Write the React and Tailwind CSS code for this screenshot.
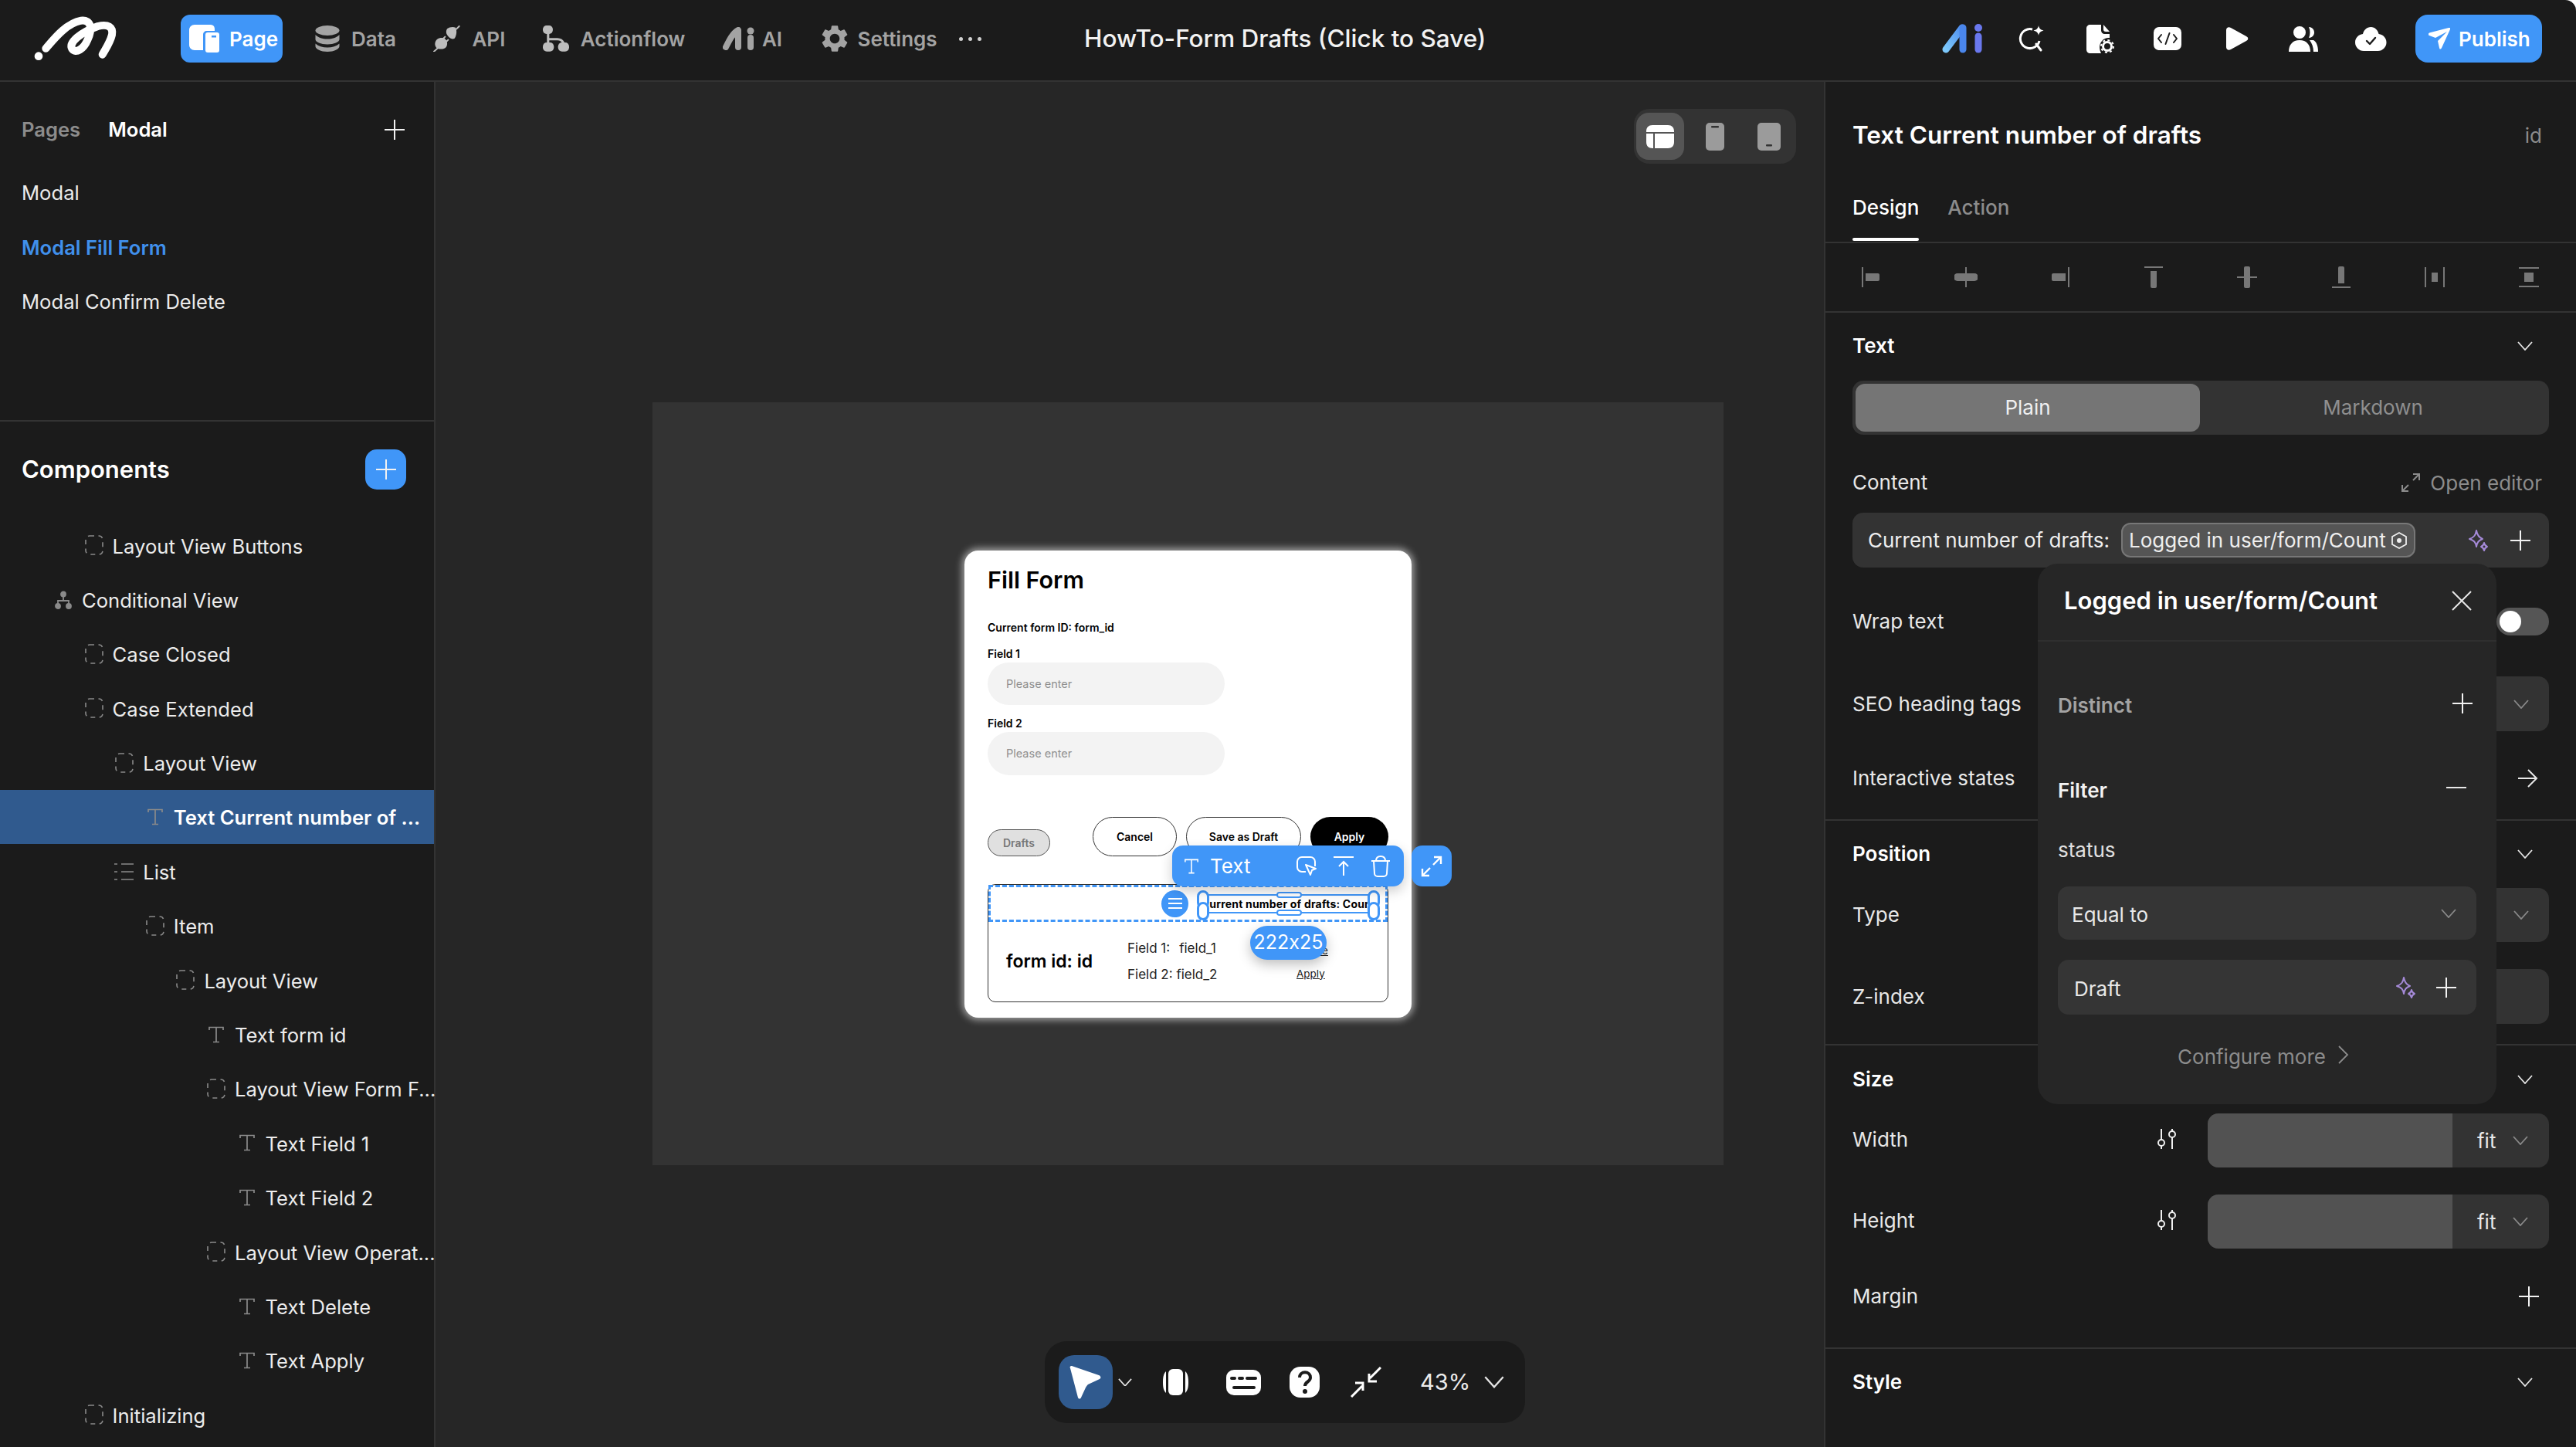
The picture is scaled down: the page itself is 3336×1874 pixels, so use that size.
import React from 'react';
import { MdSettings } from 'react-icons/md';

const tree = [
  { label: 'Layout View Buttons', depth: 1, icon: 'box' },
  { label: 'Conditional View', depth: 0, icon: 'branch' },
  { label: 'Case Closed', depth: 1, icon: 'box' },
  { label: 'Case Extended', depth: 1, icon: 'box' },
  { label: 'Layout View', depth: 2, icon: 'box' },
  { label: 'Text Current number of ...', depth: 3, icon: 'text', selected: true },
  { label: 'List', depth: 2, icon: 'list' },
  { label: 'Item', depth: 3, icon: 'box' },
  { label: 'Layout View', depth: 4, icon: 'box' },
  { label: 'Text form id', depth: 5, icon: 'text' },
  { label: 'Layout View Form F...', depth: 5, icon: 'box' },
  { label: 'Text Field 1', depth: 6, icon: 'text' },
  { label: 'Text Field 2', depth: 6, icon: 'text' },
  { label: 'Layout View Operat...', depth: 5, icon: 'box' },
  { label: 'Text Delete', depth: 6, icon: 'text' },
  { label: 'Text Apply', depth: 6, icon: 'text' },
  { label: 'Initializing', depth: 1, icon: 'box' },
];

const Plus = ({ size = 26, className = 'text-[#f2f2f2]' }) => (
  <svg width={size} height={size} viewBox="0 0 26 26" className={`shrink-0 ${className}`} fill="none" stroke="currentColor" strokeWidth="2">
    <path d="M13 0v26M0 13h26" />
  </svg>
);

const Chevron = ({ w = 20, className = 'text-[#e5e5e5]' }) => (
  <svg width={w} height={w * 0.6} viewBox="0 0 20 12" className={`shrink-0 ${className}`} fill="none" stroke="currentColor" strokeWidth="1.8">
    <path d="M1 1l9 10 9-10" />
  </svg>
);

const Sparkle = ({ className = '' }) => (
  <svg width="28" height="30" viewBox="0 0 28 30" className={`shrink-0 ${className}`} fill="none" stroke="#a58ad8" strokeWidth="2" strokeLinejoin="round">
    <path d="M11 2c1 6 3 9 8 11-5 2-7 4-8 10-1-6-3-8-9-10 6-2 8-5 9-11z" />
    <path d="M21 18c.5 3 1.500 4 4 5-2.500 1-3.500 2-4 5-.5-3-1.500-4-4-5 2.500-1 3.500-2 4-5z" />
  </svg>
);

const TextIcon = ({ className = 'text-[#8a8a8a]', size = 22 }) => (
  <svg width={size} height={size} viewBox="0 0 22 22" className={`shrink-0 ${className}`} fill="none" stroke="currentColor" strokeWidth="1.7">
    <path d="M2 5V1.500h18V5M11 1.500v19M7 20.500h8" />
  </svg>
);

const BoxIcon = () => (
  <svg width="24" height="26" viewBox="0 0 24 26" className="shrink-0 text-[#8a8a8a]" fill="none" stroke="currentColor" strokeWidth="1.6">
    <rect x="1" y="1" width="22" height="24" rx="5" strokeDasharray="6 5.500" />
  </svg>
);

const ListIcon = () => (
  <svg width="26" height="24" viewBox="0 0 26 24" className="shrink-0 text-[#8a8a8a]" fill="none" stroke="currentColor" strokeWidth="1.7">
    <path d="M0 2h4M9 2h16M0 12h4M9 12h16M0 22h4M9 22h16" />
  </svg>
);

const BranchIcon = () => (
  <svg width="24" height="24" viewBox="0 0 24 24" className="shrink-0 text-[#8a8a8a]" fill="none" stroke="currentColor" strokeWidth="1.8">
    <circle cx="12" cy="4.500" r="3" fill="currentColor" />
    <path d="M12 8v5M5 19v-6h14v6" />
    <circle cx="5" cy="20" r="3" fill="currentColor" />
    <circle cx="19" cy="20" r="3" fill="currentColor" />
  </svg>
);

const treeIcons = { box: BoxIcon, text: TextIcon, list: ListIcon, branch: BranchIcon };

const Logo = () => (
  <svg width="140" height="80" viewBox="0 0 420 240" className="shrink-0" fill="none" stroke="#fff" strokeLinecap="round">
    <path d="M88 158C125 115 170 60 225 50c40-5 45 35 25 75-15 35-45 55-60 35-15-25 35-65 100-88 40-10 60 3 55 33-7 30-25 55-37 77" strokeWidth="30" />
    <circle cx="60" cy="188" r="16" fill="#fff" stroke="none" />
  </svg>
);

const PageIcon = () => (
  <svg width="40" height="36" viewBox="0 0 40 36" className="shrink-0">
    <path d="M7 0h20c4 0 6 2 6 6v2H23c-3 0-5 2-5 5v20H7c-4 0-7-3-7-7V7c0-4 3-7 7-7z" fill="#fff" />
    <rect x="21" y="10" width="18" height="26" rx="3" fill="#fff" />
    <rect x="29" y="14" width="6" height="2.500" fill="#4096f8" />
  </svg>
);

const DataIcon = () => (
  <svg width="32" height="34" viewBox="0 0 32 34" className="shrink-0" fill="#a3a3a3">
    <ellipse cx="16" cy="6.500" rx="15.500" ry="6.500" />
    <path d="M.5 12c4 4 9 5.500 15.500 5.500S27.500 16 31.500 12v6c0 3.500-7 6.500-15.500 6.500S.5 21.500.5 18z" />
    <path d="M.5 23.500c4 3.500 9 5 15.500 5s11.500-1.500 15.500-5V27c0 3.500-7 7-15.500 7S.5 30.500.5 27z" />
  </svg>
);

const ApiIcon = () => (
  <svg width="35" height="34" viewBox="70 38 105 102" className="shrink-0" fill="#bdbdbd" stroke="#bdbdbd" strokeLinecap="round">
    <path d="M125 50c8-5 20-8 32-4 6 12 4 30-4 42-12 8-28-8-32-20-1-7 0-13 4-18z" stroke="none" />
    <path d="M160 52l11-11" strokeWidth="6" fill="none" />
    <path d="M85 92c10-7 25-8 33 0 8 8 8 22 2 30-8 10-28 10-38 2-8-10-6-24 3-32z" stroke="none" />
    <path d="M88 126l-15 13M106 92l10-10M118 104l10-10" strokeWidth="6" fill="none" />
  </svg>
);

const FlowIcon = () => (
  <svg width="34" height="34" viewBox="490 40 100 100" className="shrink-0" fill="#bdbdbd">
    <rect x="490" y="40" width="38" height="32" rx="14" />
    <rect x="490" y="105" width="42" height="34" rx="15" />
    <rect x="548" y="105" width="42" height="34" rx="15" />
    <path d="M510 70v36M510 92h35c12 0 20 6 24 16" fill="none" stroke="#bdbdbd" strokeWidth="9" />
  </svg>
);

const AiIcon = () => (
  <svg width="42" height="30" viewBox="0 0 42 30" className="shrink-0" fill="none" stroke="#a3a3a3" strokeLinecap="round">
    <path d="M4 26C9 16 13 8 20 4v22" strokeWidth="8" strokeLinejoin="round" />
    <path d="M36 14v12" strokeWidth="8" />
    <circle cx="36" cy="5" r="4.500" fill="#a3a3a3" stroke="none" />
  </svg>
);

const AiColor = () => (
  <svg width="54" height="38" viewBox="0 0 54 38" className="shrink-0" fill="none" strokeLinecap="round">
    <defs>
      <linearGradient id="aiBlue" x1="0" y1="1" x2="1" y2="0">
        <stop offset="0" stopColor="#7cc8fb" />
        <stop offset="1" stopColor="#4f8ff0" />
      </linearGradient>
    </defs>
    <path d="M5 33L26 5" stroke="url(#aiBlue)" strokeWidth="9" />
    <path d="M27 5v28" stroke="#4a86ec" strokeWidth="9" />
    <path d="M47 16v17" stroke="#6a78ee" strokeWidth="9" />
    <circle cx="47" cy="5" r="5" fill="#6a78ee" />
  </svg>
);

const SearchSpark = () => (
  <svg width="34" height="34" viewBox="0 0 34 34" className="shrink-0" fill="none" stroke="#fff" strokeWidth="3">
    <path d="M18 5A12.500 12.500 0 1 0 27 20" />
    <path d="M23 24l6 8" strokeLinecap="round" />
    <path d="M26 0c.8 4 2.500 5.500 6.500 6.500-4 1-5.700 2.500-6.500 6.500-.8-4-2.500-5.500-6.500-6.500 4-1 5.700-2.500 6.500-6.500z" fill="#fff" stroke="none" />
  </svg>
);

const FileGear = () => (
  <svg width="36" height="37" viewBox="0 0 36 37" className="shrink-0" fill="#fff">
    <path d="M5 0h14v7c0 3 2 5 5 5h6v5c-7-1-13 5-13 12 0 3 1 6 2 8H5c-3 0-5-2-5-5V5c0-3 2-5 5-5z" />
    <path d="M22 0l8 9h-5c-2 0-3-1-3-3z" />
    <circle cx="27" cy="28" r="5.500" fill="none" stroke="#fff" strokeWidth="3" />
    <circle cx="27" cy="28" r="8" fill="none" stroke="#fff" strokeWidth="2" strokeDasharray="3 3.300" />
  </svg>
);

const CodeIcon = () => (
  <svg width="36" height="30" viewBox="0 0 36 30" className="shrink-0">
    <rect width="36" height="30" rx="7" fill="#fff" />
    <path d="M10 10l-4 5 4 5M26 10l4 5-4 5M20.500 8l-5 14" fill="none" stroke="#1b1b1b" strokeWidth="2" strokeLinecap="round" strokeLinejoin="round" />
  </svg>
);

const PlayIcon = () => (
  <svg width="29" height="30" viewBox="0 0 29 30" className="shrink-0" fill="#fff">
    <path d="M0 4c0-3 3-5 6-3l20 11c3 1.500 3 4.500 0 6L6 29c-3 2-6 0-6-3z" />
  </svg>
);

const UsersIcon = () => (
  <svg width="38" height="33" viewBox="0 0 38 33" className="shrink-0" fill="#fff">
    <circle cx="14" cy="8" r="8" />
    <path d="M0 33c0-9 5-15 14-15s14 6 14 15z" />
    <path d="M26 1c4 0 7 3 7 7s-3 7-7 7c2-4 2-10 0-14zM32 18c4 2 6 8 6 15h-6c0-6-2-11-5-15z" />
  </svg>
);

const CloudCheck = () => (
  <svg width="41" height="31" viewBox="0 0 41 31" className="shrink-0">
    <path d="M20.500 0c5 0 9 4 10 9 6 1 10 5 10 11 0 6-5 11-11 11H11C5 31 0 26 0 20c0-6 4-10 10-11 1-5 5-9 10.500-9z" fill="#fff" />
    <path d="M15 18l4 4 7-8" fill="none" stroke="#1b1b1b" strokeWidth="2.400" strokeLinecap="round" strokeLinejoin="round" />
  </svg>
);

const SendIcon = () => (
  <svg width="28" height="28" viewBox="0 0 28 28" className="shrink-0" fill="#fff">
    <path d="M26 0c2-.5 2.500.5 2 2l-11 24c-1 2-2.500 2-3 0l-2-9L24 5 9 13 1 10c-2-1-1.500-2.500 0-3.500z" />
  </svg>
);

const ScreenWide = () => (
  <svg width="36" height="30" viewBox="0 0 36 30">
    <path d="M8 0h20c5 0 8 3 8 8v1H0V8c0-5 3-8 8-8zM0 11h9v19H8c-5 0-8-3-8-8zM11 11h25v11c0 5-3 8-8 8H11z" fill="#fff" />
  </svg>
);

const ScreenPhone = () => (
  <svg width="24" height="36" viewBox="0 0 24 36">
    <rect width="24" height="36" rx="5" fill="#9b9b9b" />
    <rect x="7" y="4" width="10" height="2.500" rx="1" fill="#333" />
  </svg>
);

const ScreenTablet = () => (
  <svg width="30" height="36" viewBox="0 0 30 36">
    <rect width="30" height="36" rx="5" fill="#9b9b9b" />
    <rect x="11" y="28" width="8" height="2.500" rx="1" fill="#333" />
  </svg>
);

const SliderIcon = () => (
  <svg width="28" height="26" viewBox="0 0 28 26" className="shrink-0" fill="none" stroke="#f0f0f0" strokeWidth="2">
    <path d="M7 0v14M7 22v4M21 0v3M21 11v15" />
    <circle cx="7" cy="18" r="4" />
    <circle cx="21" cy="7" r="4" />
  </svg>
);

const AlignIcon = ({ d, bar }) => (
  <svg width="30" height="30" viewBox="0 0 30 30" fill="#777">
    <path d={bar} fill="none" stroke="#777" strokeWidth="2" />
    <path d={d} />
  </svg>
);

const alignIcons = [
  { bar: 'M3 2v26', d: 'M7 10h16a2 2 0 0 1 2 2v6a2 2 0 0 1-2 2H7z' },
  { bar: 'M15 2v26', d: 'M4 10h22a2 2 0 0 1 0 10H4a2 2 0 0 1 0-10z' },
  { bar: 'M27 2v26', d: 'M7 10h16v10H7a2 2 0 0 1-2-2v-6a2 2 0 0 1 2-2z' },
  { bar: 'M3 2h24', d: 'M11 7h8v20a2 2 0 0 1-2 2h-4a2 2 0 0 1-2-2z' },
  { bar: 'M2 15h26', d: 'M11 3a2 2 0 0 1 2-2h4a2 2 0 0 1 2 2v24a2 2 0 0 1-2 2h-4a2 2 0 0 1-2-2z' },
  { bar: 'M3 28h24', d: 'M13 1h4a2 2 0 0 1 2 2v20h-8V3a2 2 0 0 1 2-2z' },
  { bar: 'M3 2v26M27 2v26', d: 'M11 9h8v12h-8z' },
  { bar: 'M2 3h26M2 27h26', d: 'M9 9h12v12H9z' },
];

const TreeRow = ({ label, depth, icon, selected }) => {
  const Icon = treeIcons[icon];
  return (
    <div
      className={`h-[70.4px] flex items-center text-[25.6px] whitespace-nowrap ${selected ? 'bg-[#305a8e] font-semibold text-white' : 'text-[#ececec]'}`}
      style={{ paddingLeft: 70 + depth * 39.6 }}
    >
      <div className="w-[24px] flex justify-center shrink-0">
        <Icon />
      </div>
      <span className="ml-[12px] pt-[3px]">{label}</span>
    </div>
  );
};

const LeftPanel = () => (
  <aside className="w-[564px] shrink-0 border-r-2 border-[#333] flex flex-col">
    <div className="h-[440px] shrink-0 border-b-2 border-[#333] px-[28px] pt-[44px]">
      <div className="h-[36px] flex items-center text-[25.6px] font-semibold">
        <span className="text-[#8c8c8c] pt-[1px]">Pages</span>
        <span className="ml-[36px] text-white pt-[1px]">Modal</span>
        <Plus className="ml-auto mr-[10px] text-[#f2f2f2]" />
      </div>
      <div className="mt-[29px] text-[25.6px] text-[#ececec]">
        <div className="h-[70.5px] flex items-center">Modal</div>
        <div className="h-[70.5px] flex items-center font-semibold text-[#4090ec]">Modal Fill Form</div>
        <div className="h-[70.5px] flex items-center">Modal Confirm Delete</div>
      </div>
    </div>
    <div className="mt-[36px] h-[52px] shrink-0 pl-[28px] pr-[36px] flex items-center justify-between">
      <span className="text-[31px] font-semibold text-white">Components</span>
      <div className="w-[53px] h-[52px] rounded-[15px] bg-[#4096f8] flex items-center justify-center">
        <Plus />
      </div>
    </div>
    <div className="mt-[37px]">
      {tree.map((row, i) => (
        <TreeRow key={i} {...row} />
      ))}
    </div>
  </aside>
);

const SectionHead = ({ title, className = 'h-[86px]' }) => (
  <div className={`${className} flex items-center justify-between`}>
    <span className="text-[26px] font-semibold text-white pb-[1px]">{title}</span>
    <Chevron className="mr-[21px] text-[#e5e5e5]" />
  </div>
);

const Label = ({ children }) => <span className="text-[26px] text-[#e8e8e8] pb-[1px]">{children}</span>;

const SelectBox = ({ className = '', chevron = true }) => (
  <div className={`w-[442px] rounded-[14px] bg-[#333] flex items-center justify-end pr-[26px] ${className}`}>
    {chevron && <Chevron className="text-[#8a8a8a]" />}
  </div>
);

const SizeRow = ({ label, className = '' }) => (
  <div className={`h-[70px] flex items-center ${className}`}>
    <span className="text-[26px] text-[#e8e8e8] pb-[4px]">{label}</span>
    <div className="ml-auto mr-[39px] mb-[4px]">
      <SliderIcon />
    </div>
    <div className="w-[442px] h-full flex rounded-[14px] overflow-hidden bg-[#333]">
      <div className="w-[317px] bg-[#525252]" />
      <div className="flex-1 flex items-center pl-[32px] text-[26px] text-[#e8e8e8]">
        fit
        <Chevron className="ml-[22px] text-[#8a8a8a]" />
      </div>
    </div>
  </div>
);

const Popover = () => (
  <div className="absolute left-[275px] top-[624px] w-[594px] h-[700px] rounded-[26px] bg-[#262626] z-10">
    <div className="h-[101px] pb-[3px] pl-[34px] pr-[32px] flex items-center justify-between border-b-2 border-[#2f2f2f]">
      <span className="text-[31px] font-semibold text-white">Logged in user/form/Count</span>
      <svg width="26" height="26" viewBox="0 0 26 26" fill="none" stroke="#e8e8e8" strokeWidth="2"><path d="M1 1l24 24M25 1L1 25" /></svg>
    </div>
    <div className="px-[26px]">
      <div className="mt-[62px] h-[36px] flex items-center justify-between pr-[5px]">
        <span className="text-[26px] font-semibold text-[#a3a3a3] pt-[4px]">Distinct</span>
        <Plus />
      </div>
      <div className="mt-[73px] h-[36px] flex items-center justify-between pr-[13px]">
        <span className="text-[26px] font-semibold text-[#f2f2f2] pt-[6px]">Filter</span>
        <svg width="26" height="2" className="shrink-0"><path d="M0 1h26" stroke="#e8e8e8" strokeWidth="2" /></svg>
      </div>
      <div className="mt-[43px] h-[36px] flex items-center text-[26px] text-[#e0e0e0] pt-[3px]">status</div>
      <div className="mt-[31px] h-[69px] rounded-[14px] bg-[#353535] pl-[18px] pr-[26px] flex items-center justify-between text-[26px] text-[#e8e8e8]">
        <span className="pt-[4px]">Equal to</span>
        <Chevron className="text-[#8a8a8a]" />
      </div>
      <div className="mt-[26px] h-[71px] rounded-[14px] bg-[#353535] pl-[21px] pr-[26px] flex items-center text-[26px] text-[#e8e8e8]">
        <span className="pt-[4px]">Draft</span>
        <Sparkle className="ml-auto mr-[25px]" />
        <Plus />
      </div>
      <div className="mt-[34px] h-[36px] flex items-center justify-center text-[26px] text-[#8c8c8c] pr-[10px]">
        <span className="pt-[4px]">Configure more</span>
        <svg width="14" height="24" viewBox="0 0 14 24" className="ml-[16px]" fill="none" stroke="#8c8c8c" strokeWidth="1.800"><path d="M1 1l11 11L1 23" /></svg>
      </div>
    </div>
  </div>
);

const RightPanel = () => (
  <aside className="relative w-[974px] shrink-0 border-l-2 border-[#333]">
    <div className="h-[138px] px-[35px] flex items-center justify-between">
      <span className="text-[31.5px] font-semibold text-white">Text Current number of drafts</span>
      <span className="text-[26px] text-[#8c8c8c] mr-[9px]">id</span>
    </div>
    <div className="h-[71px] border-b-2 border-[#333] px-[35px] pt-[5px] flex gap-[37px] text-[26px] font-medium">
      <div className="flex flex-col">
        <span className="h-[36px] text-white">Design</span>
        <span className="mt-[23px] h-[4px] rounded-[2px] bg-white" />
      </div>
      <span className="h-[36px] text-[#8c8c8c]">Action</span>
    </div>
    <div className="h-[90px] border-b-2 border-[#333] pl-[45px] pr-[46px] flex items-center justify-between">
      {alignIcons.map((ic, i) => (
        <AlignIcon key={i} {...ic} />
      ))}
    </div>

    <div className="border-b-2 border-[#333] pl-[35px] pr-[35px] pb-[35px]">
      <SectionHead title="Text" />
      <div className="mt-[2px] h-[70px] rounded-[14px] bg-[#333] p-[4px] flex text-[26px]">
        <div className="w-[446px] rounded-[12px] bg-[#757575] flex items-center justify-center text-[#f0f0f0] pb-[2px]">Plain</div>
        <div className="flex-1 flex items-center justify-center text-[#8f8f8f] pb-[2px]">Markdown</div>
      </div>
      <div className="mt-[44px] h-[36px] flex items-center justify-between">
        <Label>Content</Label>
        <div className="flex items-center text-[26px] text-[#8c8c8c] mr-[9px]">
          <svg width="26" height="26" viewBox="0 0 26 26" className="mr-[12px]" fill="none" stroke="#8c8c8c" strokeWidth="2"><path d="M16 2h8v8M24 2l-8 8M10 24H2v-8M2 24l8-8" /></svg>
          Open editor
        </div>
      </div>
      <div className="mt-[21px] h-[71px] rounded-[14px] bg-[#333] pl-[20px] pr-[24px] flex items-center text-[26px] text-[#eeeeee]">
        <span className="whitespace-nowrap">Current number of drafts:</span>
        <div className="ml-[15px] h-[45px] w-[381px] shrink-0 rounded-[12px] bg-[#555] border-2 border-[#777] pl-[8px] flex items-center whitespace-nowrap overflow-hidden">
          Logged in user/form/Count
          <svg width="22" height="22" viewBox="0 0 22 22" className="ml-[6px] shrink-0" fill="none" stroke="#eee" strokeWidth="1.800"><path d="M11 1l9 5v10l-9 5-9-5V6z" /><circle cx="11" cy="11" r="3" fill="#eee" stroke="none" /></svg>
        </div>
        <Sparkle className="ml-auto mr-[27px]" />
        <Plus />
      </div>
      <div className="mt-[52px] h-[36px] flex items-center justify-between">
        <Label>Wrap text</Label>
        <div className="w-[68px] h-[36px] rounded-full bg-[#555] flex items-center pl-[2px]">
          <div className="w-[28px] h-[28px] rounded-full bg-white ml-[2px]" />
        </div>
      </div>
      <div className="mt-[53px] h-[71px] flex items-center justify-between">
        <Label>SEO heading tags</Label>
        <SelectBox className="h-full" />
      </div>
      <div className="mt-[43px] h-[36px] flex items-center justify-between">
        <Label>Interactive states</Label>
        <svg width="26" height="26" viewBox="0 0 26 26" className="mr-[14px]" fill="none" stroke="#e8e8e8" strokeWidth="2"><path d="M0 13h24M13 2l11 11-11 11" /></svg>
      </div>
    </div>

    <div className="border-b-2 border-[#333] px-[35px] pb-[26px]">
      <SectionHead title="Position" className="h-[85px]" />
      <div className="mt-[2px] h-[70px] flex items-center justify-between">
        <Label>Type</Label>
        <SelectBox className="h-full" />
      </div>
      <div className="mt-[35px] h-[71px] flex items-center justify-between">
        <Label>Z-index</Label>
        <SelectBox className="h-full" chevron={false} />
      </div>
    </div>

    <div className="border-b-2 border-[#333] px-[35px] pb-[48px]">
      <SectionHead title="Size" className="h-[88px]" />
      <SizeRow label="Width" />
      <SizeRow label="Height" className="mt-[35px]" />
      <div className="mt-[44px] h-[36px] flex items-center justify-between">
        <Label>Margin</Label>
        <Plus className="mr-[13px] text-[#f2f2f2]" />
      </div>
    </div>

    <div className="px-[35px]">
      <SectionHead title="Style" />
    </div>

    <Popover />
  </aside>
);

const SelectionBox = () => (
  <div className="relative w-[227px] h-[25px] border-2 border-[#4096f8] flex items-center justify-center">
    <div className="w-[205px] overflow-hidden flex justify-center whitespace-nowrap text-[14px] font-bold tracking-[0.2px] text-black">
      <span className="shrink-0">Current number of drafts: Count</span>
    </div>
    <span className="absolute left-[-7px] top-[-7px] w-[16px] h-[24px] rounded-full border-[3px] border-[#4096f8] bg-white" />
    <span className="absolute left-[-7px] top-[8px] w-[16px] h-[24px] rounded-full border-[3px] border-[#4096f8] bg-white" />
    <span className="absolute right-[-7px] top-[-7px] w-[16px] h-[24px] rounded-full border-[3px] border-[#4096f8] bg-white" />
    <span className="absolute right-[-7px] top-[8px] w-[16px] h-[24px] rounded-full border-[3px] border-[#4096f8] bg-white" />
    <span className="absolute left-[96px] top-[-5px] w-[33px] h-[8px] rounded-full border-2 border-[#4096f8] bg-white" />
    <span className="absolute left-[96px] bottom-[-5px] w-[33px] h-[8px] rounded-full border-2 border-[#4096f8] bg-white" />
  </div>
);

const ModalCanvas = () => (
  <div className="relative ml-[404px] mt-[192px] w-[579px] h-[605px] rounded-[18px] bg-white px-[30px] pt-[18px] text-black shadow-[0_0_10px_3px_rgba(255,255,255,0.55)]">
    <div className="h-[40px] flex items-center text-[30.500px] font-semibold">Fill Form</div>
    <div className="mt-[32px] h-[18px] flex items-center text-[14px] font-semibold">Current form ID: form_id</div>
    <div className="mt-[17px] h-[16px] flex items-center text-[14px] font-semibold">Field 1</div>
    <div className="mt-[4px] w-[307px] h-[55px] rounded-full bg-[#f3f3f3] pl-[24px] flex items-center text-[14.500px] text-[#8f8f8f]">Please enter</div>
    <div className="mt-[15px] h-[16px] flex items-center text-[14px] font-semibold">Field 2</div>
    <div className="mt-[4px] w-[307px] h-[56px] rounded-full bg-[#f3f3f3] pl-[24px] flex items-center text-[14.500px] text-[#8f8f8f]">Please enter</div>
    <div className="mt-[54px] h-[51px] flex items-end justify-between">
      <div className="w-[81px] h-[35px] rounded-full bg-[#e0e0e0] border border-[#555] flex items-center justify-center text-[14px] font-semibold text-[#777]">Drafts</div>
      <div className="flex h-full gap-[12px] text-[14px] font-semibold">
        <div className="w-[109px] rounded-full border border-[#333] flex items-center justify-center">Cancel</div>
        <div className="w-[149px] rounded-full border border-[#333] flex items-center justify-center">Save as Draft</div>
        <div className="w-[101px] rounded-full bg-black text-white flex items-center justify-center">Apply</div>
      </div>
    </div>
    <div className="mt-[36px] h-[153px] rounded-[10px] border border-[#333]">
      <div className="h-[48px] border-[3px] border-dashed border-[#4096f8] flex items-center justify-end gap-[16px] pr-[12px]">
        <div className="w-[35px] h-[35px] rounded-full bg-[#4096f8] flex items-center justify-center">
          <svg width="18" height="16" viewBox="0 0 18 16" fill="none" stroke="#fff" strokeWidth="2"><path d="M0 2h18M0 8h18M0 14h18" /></svg>
        </div>
        <SelectionBox />
      </div>
      <div className="h-[103px] flex items-center pl-[23px]">
        <span className="w-[157px] text-[23px] font-semibold">form id: id</span>
        <div className="w-[219px] flex flex-col gap-[14px] text-[17px] text-[#222]">
          <span className="h-[20px] flex items-center">Field 1:<span className="ml-[12px]">field_1</span></span>
          <span className="h-[20px] flex items-center">Field 2: field_2</span>
        </div>
        <div className="flex flex-col gap-[10px] text-[13.5px] underline text-[#222]">
          <span className="h-[20px]">Delete</span>
          <span className="h-[20px]">Apply</span>
        </div>
      </div>
    </div>

    {/* Selection toolbar */}
    <div className="absolute left-[269px] top-[382px] w-[300px] h-[53px] rounded-[14px] bg-[#4096f8] pl-[15px] flex items-center text-[26px] text-white shadow-[0_6px_16px_rgba(0,0,0,0.2)]">
      <TextIcon className="text-white" size={20} />
      <span className="ml-[14px]">Text</span>
      <svg width="28" height="28" viewBox="0 0 28 28" className="ml-[58px]" fill="none" stroke="#fff" strokeWidth="2" strokeLinejoin="round"><path d="M13 21H8a6 6 0 0 1-6-6V8a6 6 0 0 1 6-6h11a6 6 0 0 1 6 6v6" /><path d="M13 12l13 5-5 2-2 6z" /></svg>
      <svg width="28" height="28" viewBox="0 0 28 28" className="ml-[20px]" fill="none" stroke="#fff" strokeWidth="2"><path d="M1 2h26M14 26V9M8 14l6-6 6 6" /></svg>
      <svg width="26" height="28" viewBox="0 0 26 28" className="ml-[21px]" fill="none" stroke="#fff" strokeWidth="2" strokeLinejoin="round"><path d="M1 7h24M4 7l1 16a4 4 0 0 0 4 4h8a4 4 0 0 0 4-4l1-16M7 7c0-4 2-6 6-6s6 2 6 6" /></svg>
    </div>
    <div className="absolute left-[579px] top-[382px] w-[52px] h-[53px] rounded-[14px] bg-[#4096f8] flex items-center justify-center">
      <svg width="28" height="28" viewBox="0 0 28 28" fill="none" stroke="#fff" strokeWidth="2.400"><path d="M17 2h9v9M26 2L16 12M11 26H2v-9M2 26l10-10" /></svg>
    </div>
    <div className="absolute left-[370px] top-[486px] w-[99px] h-[44px] rounded-full bg-[#4096f8] flex items-center justify-center text-[25px] text-white [font-feature-settings:'calt'_0] shadow-[0_6px_16px_rgba(0,0,0,0.25)]">222x25</div>
  </div>
);

const ViewSwitch = () => (
  <div className="absolute left-[1552px] top-[35px] w-[210px] h-[71px] rounded-[20px] bg-[#333] pl-[3px] flex items-center">
    <div className="w-[62px] h-[61px] rounded-[16px] bg-[#555] flex items-center justify-center"><ScreenWide /></div>
    <div className="ml-[28px]"><ScreenPhone /></div>
    <div className="ml-[43px]"><ScreenTablet /></div>
  </div>
);

const BottomBar = () => (
  <div className="absolute left-[789px] top-[1631px] w-[622px] h-[106px] rounded-[28px] bg-[#1b1b1b] pl-[18px] flex items-center text-white">
    <div className="w-[70px] h-[70px] rounded-[20px] bg-[#305a8e] flex items-center justify-center">
      <svg width="42" height="44" viewBox="0 0 42 44" fill="#fff"><path d="M3 1l35 12c3 1 3 4 1 5L24 25c-1 1-2 2-3 4l-6 13c-1 2-3 2-4 0L1 4c-1-2 0-3 2-3z" /></svg>
    </div>
    <Chevron w={18} className="ml-[7px] text-[#e5e5e5]" />
    <svg width="33" height="34" viewBox="0 0 33 34" className="ml-[40px]" fill="#fff">
      <rect x="7" y="0" width="19" height="34" rx="6" />
      <path d="M4 3v28C1 28 0 24 0 17S1 6 4 3zM29 3c3 3 4 7 4 14s-1 11-4 14z" />
    </svg>
    <svg width="45" height="33" viewBox="0 0 45 33" className="ml-[49px]">
      <rect width="45" height="33" rx="10" fill="#fff" />
      <path d="M7 11h4M17 11h4M27 11h11M10 23h26" stroke="#1b1b1b" strokeWidth="4" strokeLinecap="round" />
    </svg>
    <svg width="39" height="40" viewBox="0 0 39 40" className="ml-[37px]">
      <rect width="39" height="40" rx="14" fill="#fff" />
      <path d="M13 14c0-9 14-9 14 0 0 6-7 5-7 11" fill="none" stroke="#1b1b1b" strokeWidth="4" />
      <circle cx="20" cy="32" r="3" fill="#1b1b1b" />
    </svg>
    <svg width="40" height="40" viewBox="0 0 40 40" className="ml-[40px]" fill="none" stroke="#fff" strokeWidth="3">
      <path d="M1 39l14-14M6 21h10v10M39 1L25 15M34 19H24V9" />
    </svg>
    <span className="ml-[50px] text-[29px] text-[#ececec]">43%</span>
    <Chevron w={26} className="ml-[18px] text-[#e5e5e5]" />
  </div>
);

const NavItem = ({ icon, label, gap = 'ml-[15px]' }) => (
  <div className="flex items-center text-[26px] font-semibold text-[#a3a3a3]">
    {icon}
    <span className={gap}>{label}</span>
  </div>
);

const Header = () => (
  <header className="relative h-[106px] shrink-0 border-b-2 border-[#333] pb-[4px] flex items-center">
    <div className="w-[1404px] shrink-0 pl-[30px] flex items-center">
      <Logo />
      <div className="ml-[64px] w-[132px] h-[62px] rounded-[12px] bg-[#4096f8] pl-[11px] flex items-center text-[26px] font-semibold text-white">
        <PageIcon />
        <span className="ml-[12px]">Page</span>
      </div>
      <div className="ml-[42px] flex items-center gap-[48.5px]">
        <NavItem icon={<DataIcon />} label="Data" />
        <NavItem icon={<ApiIcon />} label="API" />
        <NavItem icon={<FlowIcon />} label="Actionflow" />
        <NavItem icon={<AiIcon />} label="AI" gap="ml-[9px]" />
        <NavItem icon={<MdSettings size={42} className="shrink-0 -mx-[2px]" />} label="Settings" gap="ml-[11px]" />
      </div>
      <div className="ml-[28px] flex gap-[7px]">
        <span className="w-[5px] h-[5px] rounded-full bg-[#d0d0d0]" />
        <span className="w-[5px] h-[5px] rounded-full bg-[#d0d0d0]" />
        <span className="w-[5px] h-[5px] rounded-full bg-[#d0d0d0]" />
      </div>
    </div>
    <span className="text-[31.500px] font-medium text-[#f2f2f2] whitespace-nowrap">HowTo-Form Drafts (Click to Save)</span>
    <div className="ml-auto mr-[44px] flex items-center">
      <AiColor />
      <div className="ml-[45px]"><SearchSpark /></div>
      <div className="ml-[54px]"><FileGear /></div>
      <div className="ml-[51px]"><CodeIcon /></div>
      <div className="ml-[58px]"><PlayIcon /></div>
      <div className="ml-[52px]"><UsersIcon /></div>
      <div className="ml-[48px]"><CloudCheck /></div>
      <div className="ml-[37px] w-[164px] h-[62px] rounded-[16px] bg-[#4096f8] pl-[17px] flex items-center text-[26px] font-semibold text-white">
        <SendIcon />
        <span className="ml-[11px]">Publish</span>
      </div>
    </div>
  </header>
);

export default function App() {
  return (
    <div className="relative w-[3336px] h-[1874px] overflow-hidden rounded-tr-[14px] bg-[#1b1b1b] font-['Inter',sans-serif] flex flex-col">
      <Header />
      <div className="flex flex-1 min-h-0">
        <LeftPanel />
        <main className="relative flex-1 bg-[#262626] pt-[415px] pl-[281px]">
          <div className="w-[1387px] h-[988px] bg-[#333] flow-root">
            <ModalCanvas />
          </div>
          <ViewSwitch />
          <BottomBar />
        </main>
        <RightPanel />
      </div>
    </div>
  );
}
